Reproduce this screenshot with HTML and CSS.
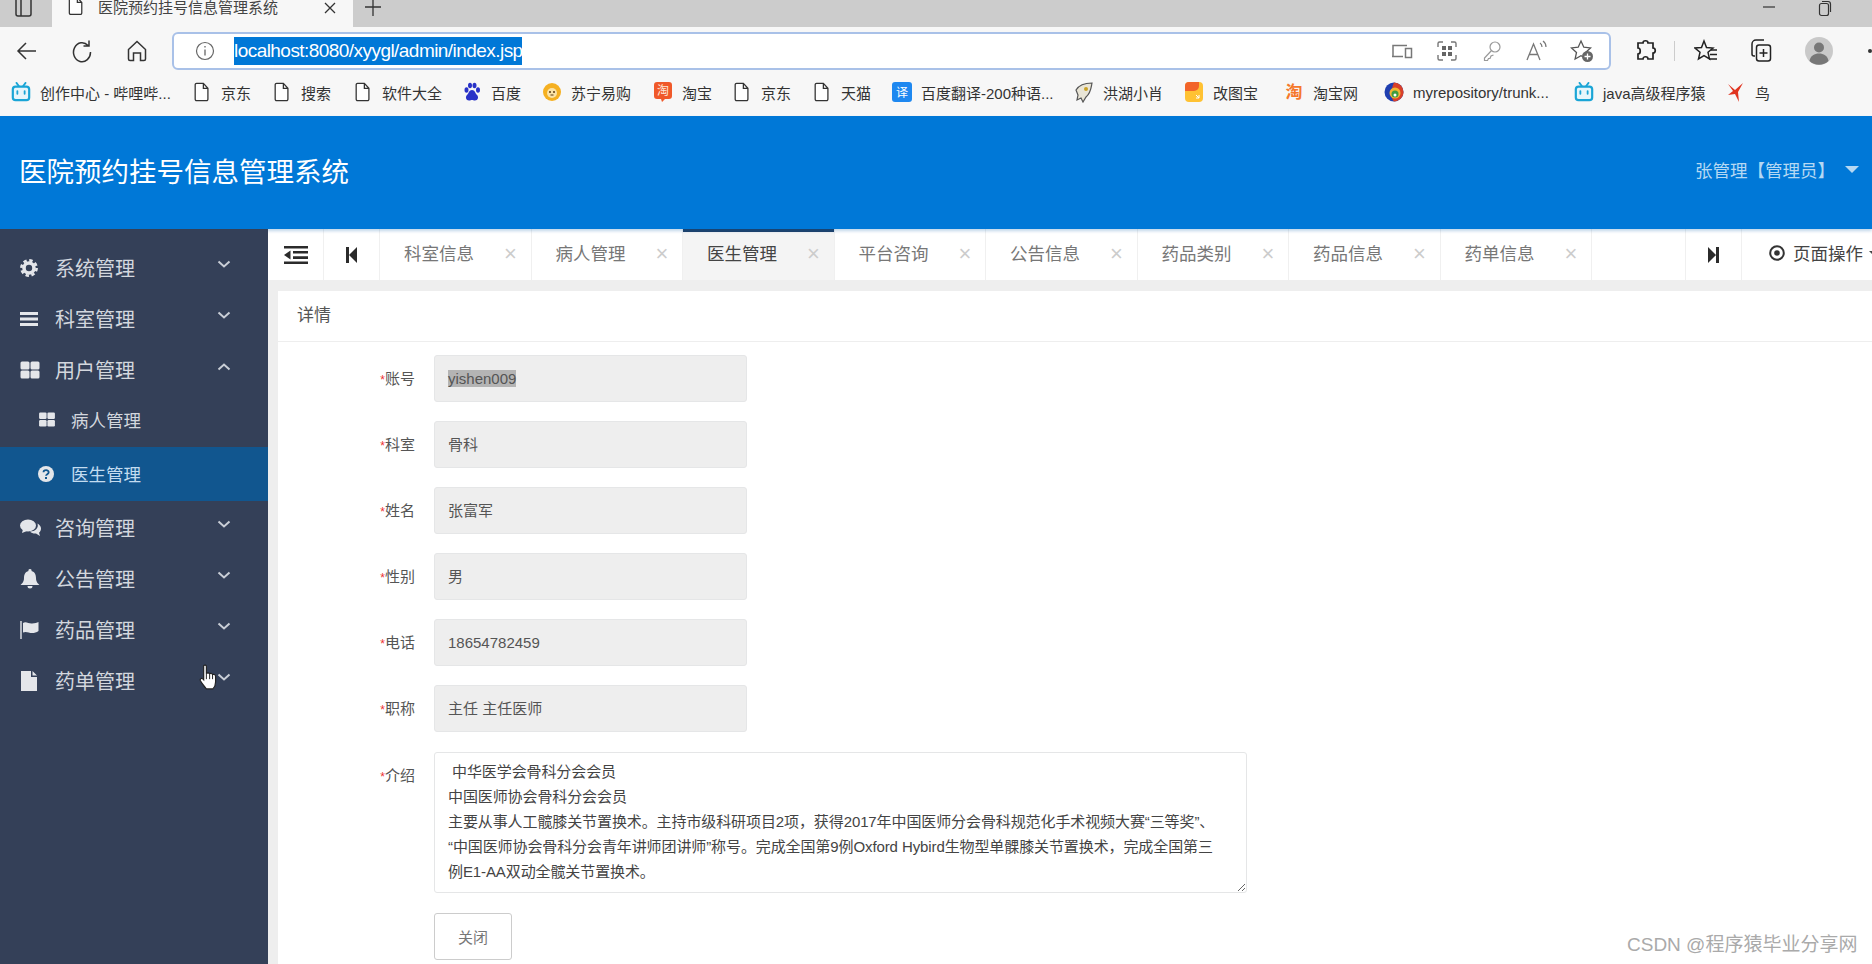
FILE: index.html
```html
<!DOCTYPE html>
<html lang="zh-CN">
<head>
    <meta charset="UTF-8">
    <title>医院预约挂号信息管理系统</title>
    <link rel="stylesheet" href="styles.css">
</head>
<body>
    <svg class="defs" width="0" height="0">
        <symbol id="doc" viewBox="0 0 18 22"><path d="M3 1.500h7.500l5 5.500V19a1.500 1.500 0 0 1-1.500 1.500H3A1.500 1.500 0 0 1 1.500 19V3A1.500 1.500 0 0 1 3 1.500zM10.500 1.500V7h5" fill="#fff" stroke="#333" stroke-width="1.400"/></symbol>
        <symbol id="bili" viewBox="0 0 22 22"><path d="M6 1l3 4M16 1l-3 4" stroke="#1aa5d6" stroke-width="2" stroke-linecap="round"/><rect x="2" y="5" width="18" height="15" rx="3" fill="#e6f6fb" stroke="#1aa5d6" stroke-width="2.400"/><path d="M7 10v3M15 10v3" stroke="#1aa5d6" stroke-width="2" stroke-linecap="round"/></symbol>
        <symbol id="chev-d" viewBox="0 0 14 9"><path d="M1.500 1.500L7 6.500l5.500-5" fill="none" stroke="#c9ced6" stroke-width="2"/></symbol>
        <symbol id="chev-u" viewBox="0 0 14 9"><path d="M1.500 7.500L7 2.500l5.500 5" fill="none" stroke="#c9ced6" stroke-width="2"/></symbol>
        <symbol id="grid4" viewBox="0 0 20 18"><rect x="0.500" y="0.500" width="9" height="8" rx="1.500" fill="#e4e6ea"/><rect x="10.500" y="0.500" width="9" height="8" rx="1.500" fill="#e4e6ea"/><rect x="0.500" y="9.500" width="9" height="8" rx="1.500" fill="#e4e6ea"/><rect x="10.500" y="9.500" width="9" height="8" rx="1.500" fill="#e4e6ea"/></symbol>
    </svg>

    <div class="tabstrip">
        <svg class="strip-icon" width="20" height="20" viewBox="0 0 20 20"><rect x="3" y="-3" width="15" height="19" rx="2" fill="none" stroke="#333" stroke-width="1.500"/><path d="M8 -3v19" stroke="#333" stroke-width="1.500"/></svg>
        <div class="browser-tab">
            <svg width="16" height="20"><use href="#doc"/></svg>
            <span class="browser-tab-title">医院预约挂号信息管理系统</span>
            <svg class="browser-tab-x" width="12" height="12" viewBox="0 0 12 12"><path d="M1 1l10 10M11 1L1 11" stroke="#333" stroke-width="1.300"/></svg>
        </div>
        <svg class="strip-plus" width="18" height="18" viewBox="0 0 18 18"><path d="M9 0v17M1 8h16" stroke="#333" stroke-width="1.300"/></svg>
        <div class="win-controls">
            <svg width="14" height="14" viewBox="0 0 14 14"><path d="M1 7h12" stroke="#333" stroke-width="1.200"/></svg>
            <svg width="14" height="18" viewBox="0 0 14 18"><rect x="1.500" y="3.500" width="9" height="12" rx="2" fill="none" stroke="#333" stroke-width="1.200"/><path d="M4 1.500h6a2.500 2.500 0 0 1 2.500 2.500v8" fill="none" stroke="#333" stroke-width="1.200"/></svg>
        </div>
    </div>

    <div class="toolbar">
        <button class="nav-btn"><svg width="22" height="22" viewBox="0 0 22 22"><path d="M20 11H2M10 3l-8 8 8 8" fill="none" stroke="#333" stroke-width="1.500"/></svg></button>
        <button class="nav-btn"><svg width="22" height="24" viewBox="0 0 22 24"><path d="M17 6.500A8.500 9.500 0 1 0 19.500 13M18 1.500V7h-5.500" fill="none" stroke="#333" stroke-width="1.500"/></svg></button>
        <button class="nav-btn"><svg width="22" height="24" viewBox="0 0 22 24"><path d="M2.500 10.500L11 2.500l8.500 8V20a1.500 1.500 0 0 1-1.500 1.500h-3.500V14h-7v7.500H4A1.500 1.500 0 0 1 2.500 20z" fill="none" stroke="#333" stroke-width="1.500"/></svg></button>
        <div class="address">
            <svg class="addr-info" width="20" height="20" viewBox="0 0 20 20"><circle cx="10" cy="10" r="8.500" fill="none" stroke="#666" stroke-width="1.200"/><path d="M10 8.500v6M10 5v1.500" stroke="#666" stroke-width="1.300"/></svg>
            <span class="url">localhost:8080/xyygl/admin/index.jsp</span>
            <div class="addr-icons">
                <svg width="22" height="20" viewBox="0 0 22 20"><path d="M2 15V4.500h14M1 15.500h11" fill="none" stroke="#777" stroke-width="1.500"/><rect x="14.500" y="7.500" width="6" height="9" fill="none" stroke="#777" stroke-width="1.500"/></svg>
                <svg width="22" height="22" viewBox="0 0 22 22"><path d="M7 2H3.500A1.500 1.500 0 0 0 2 3.500V7M15 2h3.500A1.500 1.500 0 0 1 20 3.500V7M7 20H3.500A1.500 1.500 0 0 1 2 18.500V15M15 20h3.500a1.500 1.500 0 0 0 1.500-1.500V15" fill="none" stroke="#777" stroke-width="1.400"/><path d="M6 6h4v4H6zM12 6h4v4h-4zM6 12h4v4H6zM12 12h4v4h-4z" fill="#666"/></svg>
                <svg width="20" height="22" viewBox="0 0 20 22"><circle cx="13" cy="7" r="5" fill="none" stroke="#999" stroke-width="1.200"/><path d="M9.500 10.500L2.500 18v2.500h3l1-2h1.500l1-2.500 2.500-1" fill="none" stroke="#999" stroke-width="1.200"/></svg>
                <svg width="24" height="22" viewBox="0 0 24 22"><path d="M2 20L8.500 4 15 20M4.500 14.500h8" fill="none" stroke="#777" stroke-width="1.300"/><path d="M15 3c1.500 1 2 2.500 2 4M18 1c2 1.500 3 3.500 3 6" fill="none" stroke="#777" stroke-width="1.200"/></svg>
                <svg width="24" height="24" viewBox="0 0 24 24"><path d="M11 2l2.800 6.200 6.700.7-5 4.500 1.400 6.600L11 16.700 5.100 20l1.400-6.600-5-4.500 6.700-.7z" fill="none" stroke="#555" stroke-width="1.300"/><circle cx="17.500" cy="17.500" r="5.500" fill="#666"/><path d="M17.500 14.500v6M14.500 17.500h6" stroke="#fff" stroke-width="1.300"/></svg>
            </div>
        </div>
        <div class="tool-icons">
            <svg width="22" height="24" viewBox="0 0 22 24"><path d="M8 4c0-3 5-3 5 0h5v5c3 0 3 5 0 5v6h-5c0-3-5-3-5 0H3v-5c3 0 3-6 0-6V4z" fill="none" stroke="#222" stroke-width="1.700"/></svg>
            <span class="tool-sep"></span>
            <svg class="tool-star" width="24" height="24" viewBox="0 0 24 24"><path d="M10 2l2.500 6.500 6.500.5-5 4.300 1.500 6.700L10 16.600 4.500 20 6 13.300 1 9l6.500-.5z" fill="none" stroke="#222" stroke-width="1.500"/><path d="M17 11h6M16 15.500h7M15 20h8" stroke="#222" stroke-width="1.500"/></svg>
            <svg class="tool-coll" width="24" height="26" viewBox="0 0 24 26"><path d="M5 18H4a2 2 0 0 1-2-2V6a4 4 0 0 1 4-4h8" fill="none" stroke="#222" stroke-width="1.500"/><rect x="6.500" y="7" width="14" height="16" rx="2.500" fill="none" stroke="#222" stroke-width="1.500"/><path d="M13.500 11v8M9.500 15h8" stroke="#222" stroke-width="1.500"/></svg>
            <svg class="tool-avatar" width="28" height="28" viewBox="0 0 28 28"><circle cx="14" cy="14" r="14" fill="#c9c9c9"/><circle cx="14" cy="10.500" r="5" fill="#777"/><path d="M4.500 24c1-5.500 5-7.500 9.500-7.500s8.500 2 9.500 7.500a14 14 0 0 1-19 0z" fill="#777"/></svg>
            <span class="tool-dot"></span>
        </div>
    </div>

    <div class="bookmarks">
        <div class="bm"><svg width="20" height="20"><use href="#bili"/></svg><span>创作中心 - 哔哩哔...</span></div>
        <div class="bm"><svg width="16" height="20"><use href="#doc"/></svg><span>京东</span></div>
        <div class="bm"><svg width="16" height="20"><use href="#doc"/></svg><span>搜索</span></div>
        <div class="bm"><svg width="16" height="20"><use href="#doc"/></svg><span>软件大全</span></div>
        <div class="bm"><svg width="18" height="20" viewBox="0 0 18 20"><ellipse cx="3.500" cy="8" rx="2" ry="2.800" fill="#2932c8"/><ellipse cx="7" cy="3.500" rx="2" ry="2.800" fill="#2932c8"/><ellipse cx="11.500" cy="3.500" rx="2" ry="2.800" fill="#2932c8"/><ellipse cx="15" cy="8" rx="2" ry="2.800" fill="#2932c8"/><path d="M9 8c3 0 3 3 5 5s1 5.500-2 5.500c-1.500 0-2-.5-3-.5s-1.500.5-3 .5c-3 0-4-3.500-2-5.500s2-5 5-5z" fill="#2932c8"/></svg><span>百度</span></div>
        <div class="bm"><svg width="20" height="20" viewBox="0 0 20 20"><circle cx="10" cy="10" r="9" fill="#f5b021"/><circle cx="10" cy="11" r="5" fill="#fbe3a6"/><circle cx="8" cy="10" r="1" fill="#5a3a10"/><circle cx="12" cy="10" r="1" fill="#5a3a10"/><path d="M8.500 13h3" stroke="#5a3a10" stroke-width="1"/></svg><span>苏宁易购</span></div>
        <div class="bm"><svg width="20" height="22" viewBox="0 0 20 22"><path d="M4 1h12a3 3 0 0 1 3 3v11a3 3 0 0 1-3 3h-4l-3 3-1-3H4a3 3 0 0 1-3-3V4a3 3 0 0 1 3-3z" fill="#f0592a"/><text x="10" y="14" class="fav-text" fill="#fde9d9">淘</text></svg><span>淘宝</span></div>
        <div class="bm"><svg width="16" height="20"><use href="#doc"/></svg><span>京东</span></div>
        <div class="bm"><svg width="16" height="20"><use href="#doc"/></svg><span>天猫</span></div>
        <div class="bm"><svg width="20" height="22" viewBox="0 0 20 22"><rect x="0" y="1" width="20" height="20" rx="3" fill="#1e88f0"/><text x="10" y="16" class="fav-text" fill="#fff">译</text></svg><span>百度翻译-200种语...</span></div>
        <div class="bm"><svg width="22" height="22" viewBox="0 0 22 22"><path d="M3 9c3-5 9-7 16-7-1 5-1 10-6 14l-3 5-2-4-4 2 1-5z" fill="#e9e5d6" stroke="#555" stroke-width="1.200"/><circle cx="13" cy="8" r="2" fill="#c9a227"/></svg><span>洪湖小肖</span></div>
        <div class="bm"><svg width="20" height="22" viewBox="0 0 20 22"><rect x="1" y="1" width="18" height="20" rx="4" fill="#ffc233"/><path d="M1 5a4 4 0 0 1 4-4h10v4a5 5 0 0 1-5 5H1z" fill="#f2642a"/><path d="M12 14l3 3M15 14v3h-3" fill="none" stroke="#fff" stroke-width="1"/></svg><span>改图宝</span></div>
        <div class="bm"><svg width="20" height="20" viewBox="0 0 20 20"><text x="10" y="16" class="fav-text fav-big" fill="#f5782a">淘</text></svg><span>淘宝网</span></div>
        <div class="bm"><svg width="20" height="20" viewBox="0 0 20 20"><circle cx="10" cy="10" r="9.500" fill="#1f3fb0"/><path d="M10 .5a9.500 9.500 0 0 1 9.500 9.500c0 5-4 9-9.500 9.500-3-3-4-10 0-19z" fill="#d8402a"/><circle cx="11" cy="11" r="5.500" fill="#f2b632"/><circle cx="11" cy="12" r="3.500" fill="#3f9c3f"/><circle cx="11" cy="13" r="1.500" fill="#fff"/></svg><span>myrepository/trunk...</span></div>
        <div class="bm"><svg width="20" height="20"><use href="#bili"/></svg><span>java高级程序猿</span></div>
        <div class="bm"><svg width="20" height="22" viewBox="0 0 20 22"><path d="M2 3l7 6 8-7-5 9 1 10-4-8-7 1 5-4z" fill="#e0341f"/></svg><span>鸟</span></div>
    </div>

    <header class="site-header">
        <div class="site-title">医院预约挂号信息管理系统</div>
        <div class="site-user">张管理【管理员】<span class="caret"></span></div>
    </header>

    <div class="main">
        <aside class="sidebar">
            <div class="menu-item">
                <svg class="menu-icon" width="18" height="18" viewBox="0 0 18 18"><circle cx="9" cy="9" r="5" fill="none" stroke="#e4e6ea" stroke-width="3.600"/><circle cx="9" cy="9" r="7.600" fill="none" stroke="#e4e6ea" stroke-width="2.600" stroke-dasharray="3.400 2.570"/></svg>
                <span>系统管理</span><svg class="menu-chev" width="14" height="9"><use href="#chev-d"/></svg>
            </div>
            <div class="menu-item">
                <svg class="menu-icon" width="18" height="16" viewBox="0 0 18 16"><path d="M0 1h18v3H0zM0 6.500h18v3H0zM0 12h18v3H0z" fill="#e4e6ea"/></svg>
                <span>科室管理</span><svg class="menu-chev" width="14" height="9"><use href="#chev-d"/></svg>
            </div>
            <div class="menu-item">
                <svg class="menu-icon" width="20" height="18"><use href="#grid4"/></svg>
                <span>用户管理</span><svg class="menu-chev" width="14" height="9"><use href="#chev-u"/></svg>
            </div>
            <div class="submenu-item">
                <svg class="menu-icon" width="18" height="15" viewBox="0 0 20 18"><use href="#grid4"/></svg>
                <span>病人管理</span>
            </div>
            <div class="submenu-item is-active">
                <svg class="menu-icon" width="16" height="16" viewBox="0 0 16 16"><circle cx="8" cy="8" r="8" fill="#e4e6ea"/><path d="M5.500 6.200C5.500 3.600 10.700 3.400 10.700 6.200c0 2-2.700 1.900-2.700 3.600" fill="none" stroke="#11568f" stroke-width="1.800"/><rect x="7" y="11" width="2" height="2" fill="#11568f"/></svg>
                <span>医生管理</span>
            </div>
            <div class="menu-item">
                <svg class="menu-icon" width="21" height="18" viewBox="0 0 21 18"><ellipse cx="8" cy="6.500" rx="8" ry="6" fill="#e4e6ea"/><path d="M3 10l-1 4 5-2z" fill="#e4e6ea"/><path d="M17.500 4.500c2 1 3.500 3 3.500 5s-1 3.500-2 4.200l1 3.300-4-2.500c-2 .3-4.500-.3-6-2 5 0 9-3.500 7.500-8z" fill="#e4e6ea"/></svg>
                <span>咨询管理</span><svg class="menu-chev" width="14" height="9"><use href="#chev-d"/></svg>
            </div>
            <div class="menu-item">
                <svg class="menu-icon" width="20" height="20" viewBox="0 0 20 20"><path d="M10 0a1.500 1.500 0 0 1 1.500 2C15 3 16 6 16 9c0 4 2 5.500 3.500 7h-19C2 14.500 4 13 4 9c0-3 1-6 4.500-7A1.500 1.500 0 0 1 10 0zM7.500 17h5a2.500 2.500 0 0 1-5 0z" fill="#e4e6ea"/></svg>
                <span>公告管理</span><svg class="menu-chev" width="14" height="9"><use href="#chev-d"/></svg>
            </div>
            <div class="menu-item">
                <svg class="menu-icon" width="20" height="18" viewBox="0 0 20 18"><path d="M1 0v18" stroke="#e4e6ea" stroke-width="1.400"/><path d="M3 2c3-2 6 1 9 .5 3 0 5-1 6.500-1.500v9c-2 1.500-4 2-6.500 2-3 0-6-2-9-.5z" fill="#e4e6ea"/></svg>
                <span>药品管理</span><svg class="menu-chev" width="14" height="9"><use href="#chev-d"/></svg>
            </div>
            <div class="menu-item">
                <svg class="menu-icon" width="18" height="20" viewBox="0 0 18 20"><path d="M1 0h10v6h6v14H1zM12.500 0L17 4.500h-4.500z" fill="#e4e6ea"/></svg>
                <span>药单管理</span><svg class="menu-chev" width="14" height="9"><use href="#chev-d"/></svg>
            </div>
            <svg class="hand-cursor" width="20" height="26" viewBox="0 0 18 24"><path d="M5 1.500c1-1 2.500-.5 2.500 1V9c.5-1 2.500-1 3 .2.700-.8 2.300-.6 2.700.6.800-.6 2.800-.2 2.800 1.700v5c0 3-1.500 5.500-2.500 6.500H7.500C6 21 4 19 2 15.500c-.8-1.500.8-3 2.200-1.800L5 14.500z" fill="#fff" stroke="#222" stroke-width="1.100"/><path d="M7.500 9v5M10.500 9.500V14M13.200 10v4" stroke="#222" stroke-width=".9"/></svg>
        </aside>

        <div class="content">
            <div class="tabbar">
                <div class="tabbar-btn tabbar-toggle"><svg width="24" height="18" viewBox="0 0 24 18"><path d="M0 0h24v2.600H0zM9 5h15v2.600H9zM9 10.300h15v2.600H9zM0 15.400h24V18H0z" fill="#2b2b2b"/><path d="M6.500 4.500v9L0 9z" fill="#2b2b2b"/></svg></div>
                <div class="tabbar-btn tabbar-prev"><svg width="11" height="16" viewBox="0 0 11 16"><path d="M0 0h3v16H0zM11 0v16L3 8z" fill="#2b2b2b"/></svg></div>
                <div class="tab"><span>科室信息</span><b>×</b></div>
                <div class="tab"><span>病人管理</span><b>×</b></div>
                <div class="tab is-active"><span>医生管理</span><b>×</b></div>
                <div class="tab"><span>平台咨询</span><b>×</b></div>
                <div class="tab"><span>公告信息</span><b>×</b></div>
                <div class="tab"><span>药品类别</span><b>×</b></div>
                <div class="tab"><span>药品信息</span><b>×</b></div>
                <div class="tab"><span>药单信息</span><b>×</b></div>
                <div class="tabbar-fill"></div>
                <div class="tabbar-btn tabbar-next"><svg width="11" height="16" viewBox="0 0 11 16"><path d="M8 0h3v16H8zM0 0v16l8-8z" fill="#2b2b2b"/></svg></div>
                <div class="tabbar-ops"><svg width="16" height="16" viewBox="0 0 16 16"><circle cx="8" cy="8" r="6.800" fill="none" stroke="#333" stroke-width="2"/><circle cx="8" cy="8" r="2.800" fill="#333"/></svg><span>页面操作</span><i class="ops-caret"></i></div>
            </div>

            <div class="panel">
                <div class="panel-head">详情</div>
                <div class="panel-body">
                    <div class="form-row"><label class="form-label"><em>*</em>账号</label><div class="field"><span class="selected">yishen009</span></div></div>
                    <div class="form-row"><label class="form-label"><em>*</em>科室</label><div class="field">骨科</div></div>
                    <div class="form-row"><label class="form-label"><em>*</em>姓名</label><div class="field">张富军</div></div>
                    <div class="form-row"><label class="form-label"><em>*</em>性别</label><div class="field">男</div></div>
                    <div class="form-row"><label class="form-label"><em>*</em>电话</label><div class="field">18654782459</div></div>
                    <div class="form-row"><label class="form-label"><em>*</em>职称</label><div class="field">主任 主任医师</div></div>
                    <div class="form-row"><label class="form-label"><em>*</em>介绍</label><textarea class="intro" wrap="off" readonly> 中华医学会骨科分会会员
中国医师协会骨科分会会员
主要从事人工髋膝关节置换术。主持市级科研项目2项，获得2017年中国医师分会骨科规范化手术视频大赛“三等奖”、
“中国医师协会骨科分会青年讲师团讲师”称号。完成全国第9例Oxford Hybird生物型单髁膝关节置换术，完成全国第三
例E1-AA双动全髋关节置换术。</textarea></div>
                    <button class="close-btn">关闭</button>
                </div>
            </div>
        </div>
    </div>

    <div class="watermark">CSDN @程序猿毕业分享网</div>
</body>
</html>
```

FILE: styles.css
```css
* {
    box-sizing: border-box;
}

body {
    margin: 0;
    height: 964px;
    overflow: hidden;
    position: relative;
    background: #fff;
    color: #333;
    font-family: "Liberation Sans", "Noto Sans CJK SC", sans-serif;
}

.defs {
    position: absolute;
}

/* browser chrome */
.tabstrip {
    height: 27px;
    background: #cccccc;
    display: flex;
    align-items: flex-start;
    overflow: hidden;
}

.strip-icon {
    margin: 0 0 0 13px;
    width: 39px;
    padding-right: 19px;
}

.browser-tab {
    width: 301px;
    height: 27px;
    background: #f7f7f7;
    display: flex;
    align-items: flex-start;
    padding-left: 16px;
}

.browser-tab svg {
    margin-top: -4px;
    flex: none;
}

.browser-tab-title {
    font-size: 15px;
    line-height: 15px;
    margin-left: 14px;
    width: 226px;
    flex: none;
    color: #444;
}

.browser-tab-x {
    margin: 2px 0 0 0 !important;
}

.strip-plus {
    margin: -1px 0 0 11px;
}

.win-controls {
    margin-left: auto;
    display: flex;
    gap: 42px;
    padding-right: 40px;
}

.toolbar {
    height: 45px;
    padding-top: 3px;
    background: #f7f7f7;
    display: flex;
    align-items: center;
}

.nav-btn {
    width: 55px;
    height: 38px;
    padding: 0;
    background: none;
    border: none;
    display: flex;
    align-items: center;
    justify-content: center;
}

.address {
    width: 1439px;
    height: 38px;
    flex: none;
    margin-left: 8px;
    background: #fff;
    border: 2px solid #a9c1e8;
    border-radius: 6px;
    display: flex;
    align-items: center;
    padding-left: 21px;
}

.url {
    margin-left: 19px;
    background: #0078d7;
    color: #fff;
    font-size: 19px;
    line-height: 28px;
    height: 28px;
    width: 288px;
    white-space: nowrap;
    overflow: hidden;
    letter-spacing: -0.55px;
}

.addr-icons {
    margin-left: auto;
    display: grid;
    grid-template-columns: repeat(5, 45px);
    justify-items: center;
    align-items: center;
    padding-right: 5px;
}

.tool-icons {
    flex: 1;
    display: flex;
    align-items: center;
    padding-left: 24px;
}

.tool-sep {
    width: 1px;
    height: 20px;
    background: #ccc;
    margin: 0 19px 0 17px;
}

.tool-coll {
    margin-left: 32px;
}

.tool-avatar {
    margin-left: 31px;
}

.tool-dot {
    width: 4px;
    height: 4px;
    border-radius: 50%;
    background: #333;
    margin-left: 35px;
}

.bookmarks {
    height: 44px;
    padding: 0 0 4px 10px;
    background: #f7f7f7;
    display: grid;
    grid-template-columns: 181px 80px 81px 109px 80px 111px 79px 80px 80px 182px 110px 100px 100px 190px 152px auto;
    align-items: center;
}

.bm {
    display: flex;
    align-items: center;
    font-size: 15px;
    color: #333;
    white-space: nowrap;
}

.bm svg {
    width: 22px;
    margin-right: 8px;
    flex: none;
}

.fav-text {
    font-size: 12px;
    text-anchor: middle;
}

.fav-big {
    font-size: 17px;
    font-weight: bold;
}

/* site header */
.site-header {
    position: relative;
    height: 113px;
    background: #0078d7;
    display: flex;
    align-items: center;
    justify-content: space-between;
    padding: 0 13px 6px 19px;
    box-shadow: 0 2px 3px rgba(0, 90, 170, 0.25);
}

.site-title {
    color: #fff;
    font-size: 27.500px;
}

.site-user {
    color: #b5d8f3;
    font-size: 17.500px;
    display: flex;
    align-items: center;
}

.caret {
    width: 0;
    height: 0;
    margin-left: 10px;
    border-left: 7px solid transparent;
    border-right: 7px solid transparent;
    border-top: 7px solid #b5d8f3;
}

/* layout under the header */
.main {
    display: flex;
    height: 735px;
}

.sidebar {
    width: 268px;
    flex: none;
    position: relative;
    background: #344058;
    padding-top: 13px;
    color: #d3d7de;
}

.menu-item {
    height: 51px;
    display: flex;
    align-items: center;
    font-size: 20px;
    position: relative;
}

.menu-icon {
    position: absolute;
    left: 20px;
}

.menu-item span {
    margin-left: 55px;
}

.menu-chev {
    position: absolute;
    left: 217px;
    top: 18px;
}

.submenu-item {
    height: 52px;
    padding-bottom: 3px;
    display: flex;
    align-items: center;
    font-size: 17.500px;
    position: relative;
}

.submenu-item .menu-icon {
    left: 38px;
}

.submenu-item span {
    margin-left: 71px;
}

.submenu-item.is-active {
    height: 54px;
    padding-bottom: 1px;
    background: #11568f;
    color: #c3dcf0;
    margin-bottom: 1px;
}

.hand-cursor {
    position: absolute;
    left: 198px;
    top: 435px;
}

.content {
    flex: 1;
    min-width: 0;
    background: #eeeeee;
    overflow: hidden;
}

.tabbar {
    height: 51px;
    background: #fff;
    display: flex;
}

.tabbar-btn {
    display: flex;
    align-items: center;
    justify-content: center;
    border-right: 1px solid #f0f0f0;
    flex: none;
}

.tabbar-toggle {
    width: 56px;
}

.tabbar-prev {
    width: 56px;
}

.tab {
    width: 151.500px;
    flex: none;
    display: flex;
    align-items: center;
    padding-left: 24px;
    font-size: 17.500px;
    color: #777;
    border-right: 1px solid #f0f0f0;
}

.tab span {
    margin-bottom: 5px;
}

.tab b {
    margin: 0 0 2px 30px;
    font-size: 22px;
    font-weight: normal;
    color: #ccc;
}

.tab.is-active {
    background: #f4f4f4;
    color: #444;
    box-shadow: inset 0 3px 0 #1f3f66;
}

.tabbar-fill {
    width: 94px;
    flex: none;
    border-right: 1px solid #f0f0f0;
}

.tabbar-next {
    width: 56px;
}

.tabbar-ops {
    flex: none;
    display: flex;
    align-items: center;
    padding: 0 0 4px 27px;
    font-size: 17.500px;
    color: #444;
    white-space: nowrap;
}

.tabbar-ops span {
    margin-left: 8px;
}

.ops-caret {
    width: 0;
    height: 0;
    margin-left: 6px;
    border-left: 4px solid transparent;
    border-right: 4px solid transparent;
    border-top: 4px solid #444;
}

/* detail panel */
.panel {
    margin: 11px 0 0 10px;
    background: #fff;
    height: 680px;
}

.panel-head {
    height: 51px;
    padding-left: 19px;
    line-height: 50px;
    font-size: 17px;
    color: #555;
    border-bottom: 1px solid #eeeeee;
}

.panel-body {
    padding: 13px 0 0 156px;
}

.form-row {
    display: flex;
    margin-bottom: 19.100px;
    align-items: flex-start;
}

.form-label {
    width: 137px;
    height: 47px;
    margin: 0 19px 0 -156px;
    text-align: right;
    line-height: 47px;
    font-size: 15px;
    color: #555;
    flex: none;
}

.form-label em {
    color: #e33;
    font-style: normal;
    font-size: 12px;
}

.field {
    width: 313px;
    height: 47px;
    padding: 0 13px;
    background: #eeeeee;
    border: 1px solid #e5e6e7;
    border-radius: 3px;
    line-height: 45px;
    font-size: 15px;
    color: #555;
}

.selected {
    background: #b4b4b4;
}

.intro {
    width: 813px;
    height: 141px;
    padding: 6px 13px;
    background: #fff;
    border: 1px solid #e5e6e7;
    border-radius: 3px;
    font-family: inherit;
    font-size: 15px;
    letter-spacing: -0.1px;
    line-height: 25px;
    color: #444;
    outline: none;
    overflow: hidden;
    display: block;
}

.close-btn {
    width: 78px;
    height: 47px;
    margin-top: 1px;
    background: #fff;
    border: 1px solid #ccc;
    border-radius: 3px;
    font-size: 15px;
    font-family: inherit;
    color: #777;
}

.watermark {
    position: absolute;
    left: 1627px;
    top: 929px;
    font-size: 19px;
    color: #aaa;
    white-space: nowrap;
}
```
